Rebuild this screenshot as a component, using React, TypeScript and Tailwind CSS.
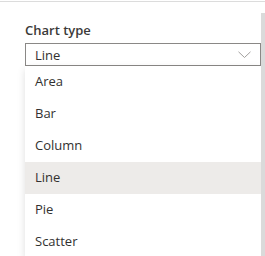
import React from "react";

const items = ["Area", "Bar", "Column", "Line", "Pie", "Scatter"];

export default function App() {
  return (
    <div
      className="w-[265px] h-[256px] overflow-hidden bg-white relative"
      style={{ fontFamily: '"Open Sans", "Noto Sans", sans-serif' }}
    >
      <div className="h-[1px] mt-[1px] bg-[#dcdcdc]" />
      <div className="flex">
        <div className="flex-1 pl-[25px] pt-[19px]">
          <div className="text-[13px] leading-[18px] font-semibold text-[#3b3a39]">Chart type</div>
          <div className="mt-[4px] h-[23px] border border-[#8a8886] flex items-center pl-[9px] pr-[9px]">
            <span className="flex-1 text-[13px] text-[#323130] leading-[18px]">Line</span>
            <svg width="13" height="8" viewBox="0 0 13 8">
              <path d="M0.5 0.8 L6.5 6.5 L12.5 0.8" fill="none" stroke="#a19f9d" strokeWidth="1" />
            </svg>
          </div>
          <div className="bg-white shadow-[0_3px_8px_rgba(0,0,0,0.13)]">
            {items.map((it) => (
              <div
                key={it}
                className={`h-[32px] flex items-center pl-[10px] text-[13px] text-[#323130] ${it === "Line" ? "bg-[#edebe9]" : "bg-white"}`}
              >
                {it}
              </div>
            ))}
          </div>
        </div>
        <div className="w-[4px] mt-[11px] h-[300px] bg-[#dadada]" />
      </div>
    </div>
  );
}
